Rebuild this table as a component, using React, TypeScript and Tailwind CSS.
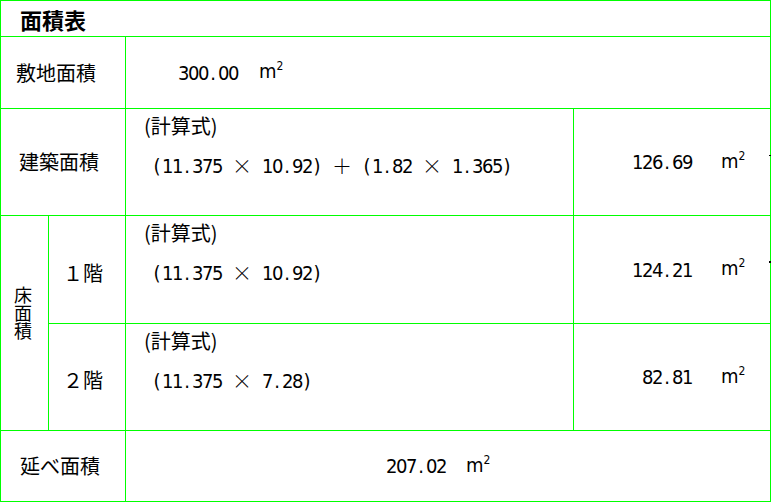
import React from 'react';

const jp = "font-['Noto_Sans_CJK_JP',sans-serif]";
const narrow = "font-['Liberation_Sans_Narrow','DejaVu_Sans_Condensed','Liberation_Sans',sans-serif]";
const cell = 'border-r border-b border-[#00ff00]';

// fixed-pitch text: half-width chars take 10px, × and ＋ take 20px
const Mono: React.FC<{ text: string }> = ({ text }) => (
  <span className="inline-flex leading-[20px]">
    {text.split('').map((ch, i) =>
      ch === '×' || ch === '＋' ? (
        <span key={i} className={`inline-block w-[20px] text-center ${jp} text-[20px] font-light`}>{ch}</span>
      ) : (
        <span key={i} className={`inline-block w-[10px] text-center ${narrow} text-[20px]`}>{ch === ' ' ? '\u00a0' : ch}</span>
      )
    )}
  </span>
);

const M2: React.FC = () => (
  <span className={`inline-block w-[20px] pl-[1px] ${narrow} text-[20px] leading-[20px]`}>
    m<span className="relative -top-[8px] text-[12px]">2</span>
  </span>
);

const Formula: React.FC<{ text: string }> = ({ text }) => (
  <div className={`${cell} flex flex-col`}>
    <div className={`pt-[7px] pl-[18px] leading-[20px] ${jp} text-[20px]`}>(計算式)</div>
    <div className="mt-[19px] pl-[26px]">
      <Mono text={text} />
    </div>
  </div>
);

const Value: React.FC<{ value: string }> = ({ value }) => (
  <div className={`${cell} flex items-center justify-end pr-[30px]`}>
    <Mono text={value} />
    <span className="ml-[28px] flex">
      <M2 />
    </span>
  </div>
);

const Label: React.FC<{ text: string; pad: string }> = ({ text, pad }) => (
  <div className={`${cell} col-span-2 flex items-center ${pad} ${jp} text-[20px] leading-[20px]`}>{text}</div>
);

export default function App() {
  return (
    <div className="relative w-[771px] h-[503px] bg-white text-black">
      <div className="grid w-[771px] grid-cols-[48px_77px_448px_197px] grid-rows-[36px_72px_107px_108px_107px_71px] border-t border-l border-[#00ff00]">
        {/* title */}
        <div className={`${cell} col-span-4 flex items-center pl-[19px] ${jp} text-[22px] font-bold leading-[22px]`}>面積表</div>

        {/* 敷地面積 */}
        <Label text="敷地面積" pad="pl-[15px]" />
        <div className={`${cell} col-span-2 flex items-center pl-[52px]`}>
          <Mono text="300.00" />
          <span className="ml-[20px] flex">
            <M2 />
          </span>
        </div>

        {/* 建築面積 */}
        <Label text="建築面積" pad="pl-[18px]" />
        <Formula text="(11.375 × 10.92) ＋ (1.82 × 1.365)" />
        <Value value="126.69" />

        {/* 床面積 */}
        <div className={`${cell} row-span-2 flex items-center justify-center pb-[20px] pr-[3px]`}>
          <span className={`${jp} text-[18px] leading-[20px] [writing-mode:vertical-rl]`}>床面積</span>
        </div>
        <div className={`${cell} flex items-center pl-[14px] pt-[6px] ${jp} text-[20px] leading-[20px]`}>１階</div>
        <Formula text="(11.375 × 10.92)" />
        <Value value="124.21" />

        <div className={`${cell} flex items-center pl-[14px] pt-[6px] ${jp} text-[20px] leading-[20px]`}>２階</div>
        <Formula text="(11.375 × 7.28)" />
        <Value value="82.81" />

        {/* 延べ面積 */}
        <Label text="延べ面積" pad="pl-[19px]" />
        <div className={`${cell} col-span-2 flex items-center pl-[260px]`}>
          <Mono text="207.02" />
          <span className="ml-[19px] flex">
            <M2 />
          </span>
        </div>
      </div>

      {/* stray marks on the right edge */}
      <span className="absolute left-[769px] top-[155px] h-[1px] w-[2px] bg-black" />
      <span className="absolute left-[769px] top-[261px] h-[2px] w-[2px] bg-black" />
    </div>
  );
}
